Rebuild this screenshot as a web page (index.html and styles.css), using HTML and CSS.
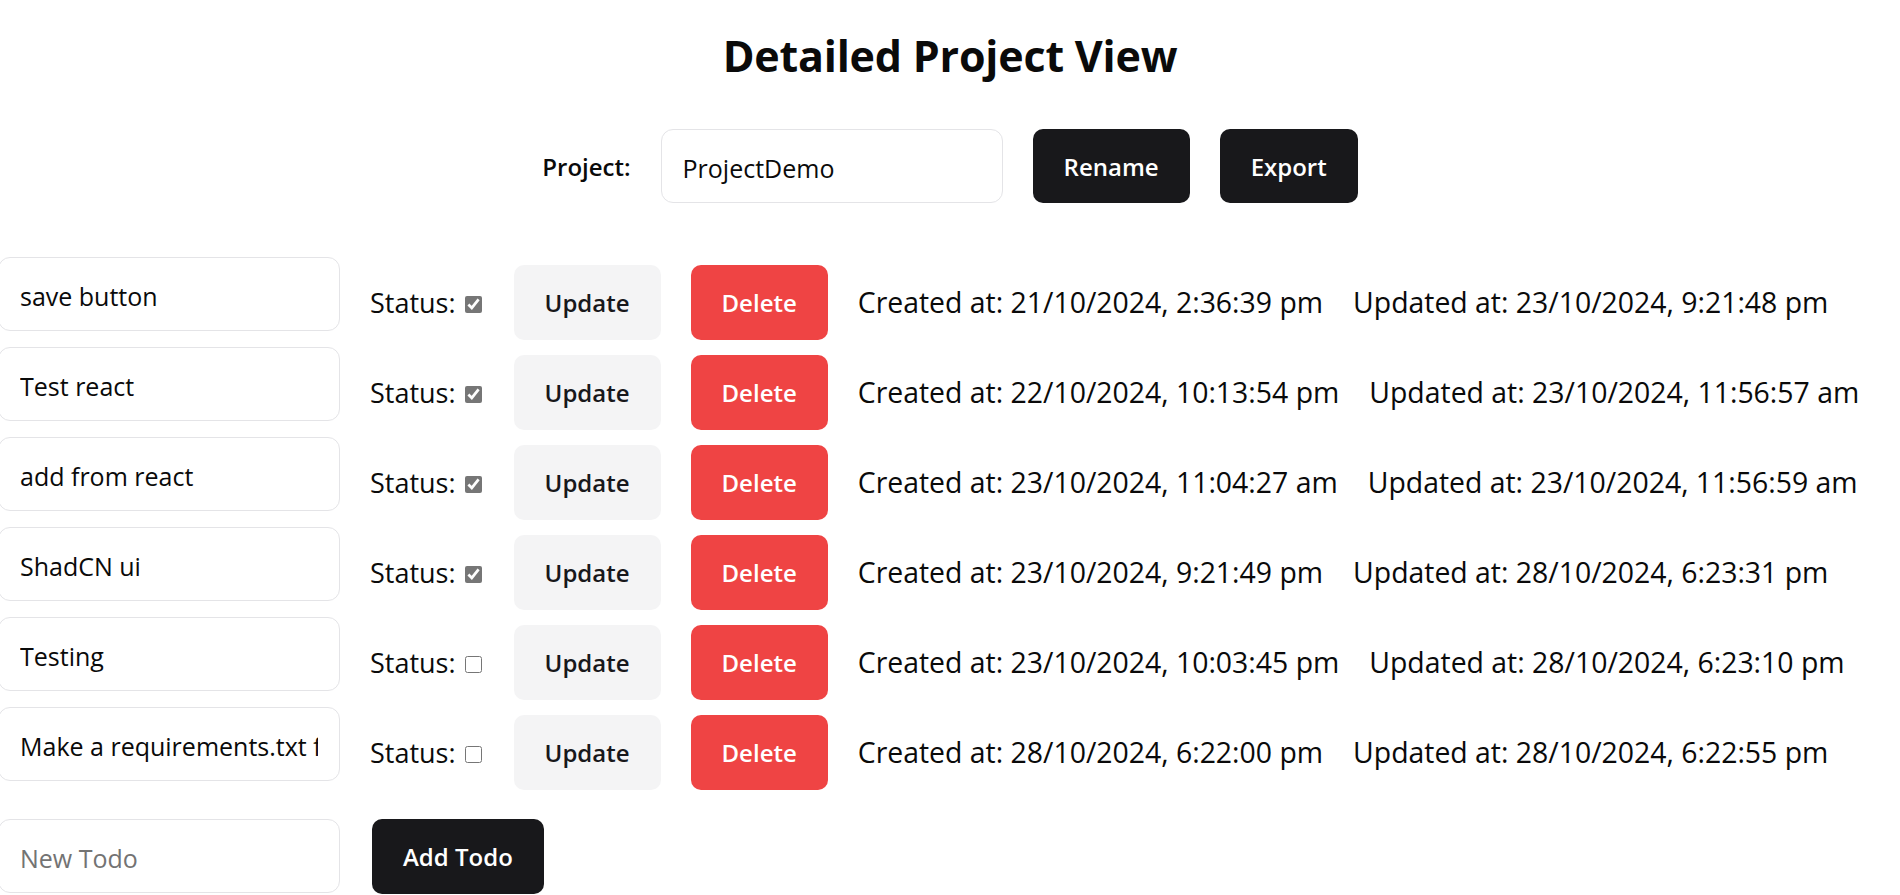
FILE: index.html
```html
<!DOCTYPE html>
<html lang="en">
<head>
<meta charset="utf-8">
<title>Detailed Project View</title>
<link rel="stylesheet" href="styles.css">
</head>
<body>
<main class="page">
  <h1 class="title">Detailed Project View</h1>

  <div class="project-bar">
    <label class="project-label" for="project">Project:</label>
    <input class="field" id="project" type="text" value="ProjectDemo">
    <button class="btn btn-dark" type="button">Rename</button>
    <button class="btn btn-dark" type="button">Export</button>
  </div>

  <ul class="todo-list">
    <li class="todo">
      <input class="field todo-field" type="text" value="save button">
      <label class="status">Status:<input type="checkbox" checked></label>
      <button class="btn btn-light" type="button">Update</button>
      <button class="btn btn-red" type="button">Delete</button>
      <span class="stamp">Created at: 21/10/2024, 2:36:39 pm</span>
      <span class="stamp">Updated at: 23/10/2024, 9:21:48 pm</span>
    </li>
    <li class="todo">
      <input class="field todo-field" type="text" value="Test react">
      <label class="status">Status:<input type="checkbox" checked></label>
      <button class="btn btn-light" type="button">Update</button>
      <button class="btn btn-red" type="button">Delete</button>
      <span class="stamp">Created at: 22/10/2024, 10:13:54 pm</span>
      <span class="stamp">Updated at: 23/10/2024, 11:56:57 am</span>
    </li>
    <li class="todo">
      <input class="field todo-field" type="text" value="add from react">
      <label class="status">Status:<input type="checkbox" checked></label>
      <button class="btn btn-light" type="button">Update</button>
      <button class="btn btn-red" type="button">Delete</button>
      <span class="stamp">Created at: 23/10/2024, 11:04:27 am</span>
      <span class="stamp">Updated at: 23/10/2024, 11:56:59 am</span>
    </li>
    <li class="todo">
      <input class="field todo-field" type="text" value="ShadCN ui">
      <label class="status">Status:<input type="checkbox" checked></label>
      <button class="btn btn-light" type="button">Update</button>
      <button class="btn btn-red" type="button">Delete</button>
      <span class="stamp">Created at: 23/10/2024, 9:21:49 pm</span>
      <span class="stamp">Updated at: 28/10/2024, 6:23:31 pm</span>
    </li>
    <li class="todo">
      <input class="field todo-field" type="text" value="Testing">
      <label class="status">Status:<input type="checkbox"></label>
      <button class="btn btn-light" type="button">Update</button>
      <button class="btn btn-red" type="button">Delete</button>
      <span class="stamp">Created at: 23/10/2024, 10:03:45 pm</span>
      <span class="stamp">Updated at: 28/10/2024, 6:23:10 pm</span>
    </li>
    <li class="todo">
      <input class="field todo-field" type="text" value="Make a requirements.txt file">
      <label class="status">Status:<input type="checkbox"></label>
      <button class="btn btn-light" type="button">Update</button>
      <button class="btn btn-red" type="button">Delete</button>
      <span class="stamp">Created at: 28/10/2024, 6:22:00 pm</span>
      <span class="stamp">Updated at: 28/10/2024, 6:22:55 pm</span>
    </li>
  </ul>

  <div class="new-todo">
    <input class="field todo-field-new" type="text" placeholder="New Todo">
    <button class="btn btn-dark" type="button">Add Todo</button>
  </div>
</main>
</body>
</html>
```
FILE: styles.css
```css
* {
  box-sizing: border-box;
}

html,
body {
  margin: 0;
  padding: 0;
  background: #ffffff;
}

body {
  font-family: "Open Sans", "Noto Sans", sans-serif;
  color: #0a0a0a;
  overflow: hidden;
}

.page {
  width: 100%;
}

.title {
  margin: 26px 0 0;
  font-size: 43px;
  line-height: 60px;
  font-weight: 700;
  text-align: center;
  letter-spacing: -0.2px;
}

.project-bar {
  display: flex;
  justify-content: center;
  align-items: center;
  gap: 30px;
  margin-top: 43px;
}

.project-label {
  font-size: 24px;
  font-weight: 600;
}

.field {
  flex-shrink: 0;
  width: 342px;
  height: 74px;
  padding: 4px 21px 0;
  border: 1px solid #e4e4e7;
  border-radius: 12px;
  font-family: inherit;
  font-size: 25px;
  color: #0a0a0a;
  background: #ffffff;
  outline: none;
}

.field::placeholder {
  color: #737373;
}

.btn {
  flex-shrink: 0;
  height: 75px;
  padding: 0 31px;
  border: 0;
  border-radius: 10px;
  font-family: inherit;
  font-size: 24px;
  font-weight: 600;
  cursor: pointer;
}

.project-bar .btn {
  height: 74px;
}

.btn-dark {
  background: #18181b;
  color: #ffffff;
}

.btn-light {
  background: #f4f4f5;
  color: #18181b;
}

.btn-red {
  background: #ef4444;
  color: #ffffff;
}

.todo-list {
  list-style: none;
  margin: 54px 0 0 -2px;
  padding: 0;
}

.todo {
  display: flex;
  align-items: center;
  gap: 30px;
  white-space: nowrap;
  font-size: 28.4px;
}

.todo-field {
  margin-bottom: 16px;
}

.status {
  flex-shrink: 0;
  font-size: 27px;
}

.status input {
  width: 17px;
  height: 17px;
  margin: 0 2px 0 9px;
  vertical-align: baseline;
  accent-color: #767676;
}

.stamp {
  flex-shrink: 0;
}

.new-todo {
  display: flex;
  align-items: flex-start;
  gap: 32px;
  margin: 22px 0 0 -2px;
}
```
